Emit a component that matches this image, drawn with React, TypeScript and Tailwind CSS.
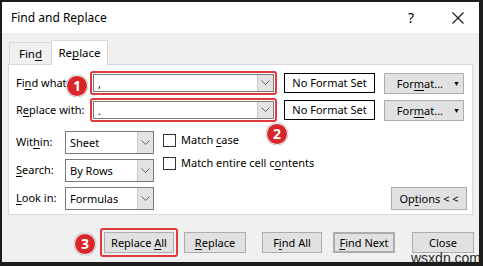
import React from 'react';

const font = { fontFamily: '"Noto Sans", "Liberation Sans", sans-serif' };

function U({ children }: { children: React.ReactNode }) {
  return <span className="underline underline-offset-2 decoration-1">{children}</span>;
}

function Chevron() {
  return (
    <svg width="9" height="6" viewBox="0 0 9 6" fill="none" stroke="#606060" strokeWidth="1">
      <polyline points="0.5 0.5 4.5 4.5 8.5 0.5" />
    </svg>
  );
}

function Combo({ value, className = '' }: { value: string; className?: string }) {
  return (
    <div className={`flex h-full border border-[#7a7a7a] bg-white ${className}`}>
      <div className="flex-1 pl-[4px] flex items-center text-[11px] text-black leading-none">{value}</div>
      <div className="w-[16px] bg-[#e3e3e3] border-l border-[#c8c8c8] flex items-center justify-center">
        <Chevron />
      </div>
    </div>
  );
}

function Badge({ n, className }: { n: string; className: string }) {
  return (
    <div
      className={`absolute w-[22px] h-[22px] rounded-full bg-[#d8262b] border border-white shadow-[0_0_1px_rgba(0,0,0,0.6)] flex items-center justify-center text-white font-bold text-[14px] leading-none ${className}`}
    >
      {n}
    </div>
  );
}

function Btn({ children, className = '' }: { children: React.ReactNode; className?: string }) {
  return (
    <div
      className={`h-[21px] bg-[#e1e1e1] border border-[#adadad] flex items-center justify-center text-[11px] text-black leading-none ${className}`}
    >
      {children}
    </div>
  );
}

export default function App() {
  return (
    <div
      className="relative w-[483px] h-[266px] bg-[#f0f0f0] border-t-[2px] border-l-[2px] border-r-[4px] border-b-[4px] border-[#1c1c1c] overflow-hidden text-black"
      style={font}
    >
      {/* title bar */}
      <div className="h-[31px] bg-white flex items-center pl-[9px] pr-[15px]">
        <div className="text-[12px] flex-1">Find and Replace</div>
        <div className="text-[14px] mr-[38px]">?</div>
        <svg width="12" height="12" viewBox="0 0 12 12" stroke="#222" strokeWidth="1.2">
          <line x1="0.5" y1="0.5" x2="11.5" y2="11.5" />
          <line x1="11.5" y1="0.5" x2="0.5" y2="11.5" />
        </svg>
      </div>

      {/* tabs */}
      <div className="flex items-end h-[31px] pl-[7px]">
        <div className="h-[22px] w-[43px] border border-b-0 border-[#d9d9d9] bg-[#f0f0f0] text-[11.5px] flex items-center justify-center">
          <span>
            Fin<U>d</U>
          </span>
        </div>
        <div className="relative z-10 -mb-px h-[25px] w-[57px] -ml-px border border-b-0 border-[#d9d9d9] bg-white text-[11.5px] flex items-center justify-center">
          <span>
            Re<U>p</U>lace
          </span>
        </div>
      </div>

      {/* panel */}
      <div className="ml-[6px] w-[465px] h-[151px] bg-white border border-[#d9d9d9] pl-[7px] pt-[6px]">
        {[
          ['Fi', 'n', 'd what:', ','],
          ['R', 'e', 'place with:', '.'],
        ].map(([a, u, b, v], i) => (
          <div key={v} className={`flex items-center h-[24px] ${i ? 'mt-[3px]' : ''}`}>
            <div className="w-[74px] text-[11px] whitespace-nowrap">
              {a}
              <U>{u}</U>
              {b}
            </div>
            <div className="w-[187px] h-[24px] border-2 border-[#e0393e] rounded-[3px] p-[1px]">
              <Combo value={v} />
            </div>
            <div className="ml-[7px] w-[91px] h-[20px] border border-black text-[11px] flex items-center justify-center">
              No Format Set
            </div>
            <Btn className="ml-[9px] w-[80px] h-[20px] justify-end pr-[3px] gap-[10px]">
              <span>
                For<U>m</U>at...
              </span>
              <span className="text-[7px]">▼</span>
            </Btn>
          </div>
        ))}

        <div className="flex mt-[9px]">
          <div className="flex flex-col gap-[5px]">
            {[
              ['Wit', 'h', 'in:', 'Sheet'],
              ['', 'S', 'earch:', 'By Rows'],
              ['', 'L', 'ook in:', 'Formulas'],
            ].map(([a, u, b, v]) => (
              <div key={v} className="flex items-center h-[23px]">
                <div className="w-[49px] text-[11px] whitespace-nowrap">
                  {a}
                  <U>{u}</U>
                  {b}
                </div>
                <Combo value={v} className="w-[89px]" />
              </div>
            ))}
          </div>
          <div className="ml-[9px] flex flex-col gap-[9px] pt-[2px]">
            <div className="flex items-center gap-[5px] h-[14px]">
              <div className="w-[13px] h-[13px] border border-[#333] bg-white" />
              <span className="text-[11px]">
                Match <U>c</U>ase
              </span>
            </div>
            <div className="flex items-center gap-[5px] h-[14px]">
              <div className="w-[13px] h-[13px] border border-[#333] bg-white" />
              <span className="text-[11px]">
                Match entire cell c<U>o</U>ntents
              </span>
            </div>
          </div>
          <div className="flex-1 flex items-end justify-end pr-[5px]">
            <Btn className="w-[76px] h-[23px]">
              <span>
                Op<U>t</U>ions &lt; &lt;
              </span>
            </Btn>
          </div>
        </div>
      </div>

      {/* bottom buttons */}
      <div className="flex items-center h-[47px] pt-[8px] pl-[98px]">
        <div className="border-2 border-[#e0393e] rounded-[3px] p-[2px]">
          <Btn className="w-[70px]">
            <span>
              Replace <U>A</U>ll
            </span>
          </Btn>
        </div>
        <Btn className="ml-[6px] w-[62px]">
          <span>
            <U>R</U>eplace
          </span>
        </Btn>
        <Btn className="ml-[16px] w-[60px]">
          <span>
            F<U>i</U>nd All
          </span>
        </Btn>
        <Btn className="ml-[11px] w-[62px] border-2 border-[#0078d7]">
          <span>
            <U>F</U>ind Next
          </span>
        </Btn>
        <Btn className="ml-[17px] w-[62px]">
          <span>Close</span>
        </Btn>
      </div>

      <Badge n="1" className="left-[64px] top-[73px]" />
      <Badge n="2" className="left-[264px] top-[121px]" />
      <Badge n="3" className="left-[72px] top-[231px]" />
      <div
        className="absolute left-[409px] top-[249px] text-[14px] text-[#2a2a2a] leading-none"
        style={{ fontFamily: '"Liberation Sans", sans-serif' }}
      >
        wsxdn.com
      </div>
    </div>
  );
}
